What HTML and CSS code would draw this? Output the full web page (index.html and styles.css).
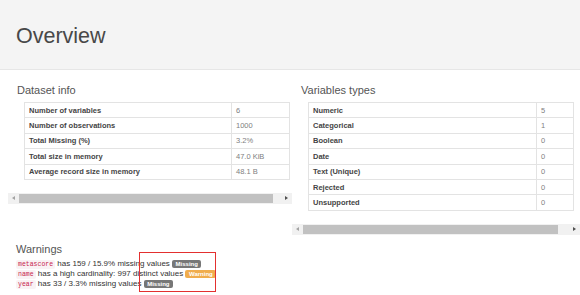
FILE: index.html
```html
<!DOCTYPE html>
<html lang="en">
<head>
  <meta charset="UTF-8">
  <title>Overview</title>
  <link rel="stylesheet" href="styles.css">
</head>
<body>
  <div class="page-header">
    <h1>Overview</h1>
  </div>

  <div class="row">
    <div class="col col-left">
      <h2>Dataset info</h2>
      <div class="table-wrap">
        <table class="stats stats-info">
          <tr><th>Number of variables</th><td>6</td></tr>
          <tr><th>Number of observations</th><td>1000</td></tr>
          <tr><th>Total Missing (%)</th><td>3.2%</td></tr>
          <tr><th>Total size in memory</th><td>47.0 KiB</td></tr>
          <tr><th>Average record size in memory</th><td>48.1 B</td></tr>
        </table>
      </div>
      <div class="scrollbar">
        <span class="arrow arrow-left off"></span>
        <span class="thumb thumb-left"></span>
        <span class="arrow arrow-right"></span>
      </div>
    </div>

    <div class="col col-right">
      <h2>Variables types</h2>
      <div class="table-wrap">
        <table class="stats stats-types">
          <tr><th>Numeric</th><td>5</td></tr>
          <tr><th>Categorical</th><td>1</td></tr>
          <tr><th>Boolean</th><td>0</td></tr>
          <tr><th>Date</th><td>0</td></tr>
          <tr><th>Text (Unique)</th><td>0</td></tr>
          <tr><th>Rejected</th><td>0</td></tr>
          <tr><th>Unsupported</th><td>0</td></tr>
        </table>
      </div>
      <div class="scrollbar">
        <span class="arrow arrow-left off"></span>
        <span class="thumb thumb-right"></span>
        <span class="arrow arrow-right"></span>
      </div>
    </div>
  </div>

  <div class="warnings">
    <h2>Warnings</h2>
    <ul>
      <li><code>metascore</code> has 159 / 15.9% missing values <span class="label label-default">Missing</span></li>
      <li><code>name</code> has a high cardinality: 997 distinct values <span class="label label-warning">Warning</span></li>
      <li><code>year</code> has 33 / 3.3% missing values <span class="label label-default">Missing</span></li>
    </ul>
    <div class="highlight"></div>
  </div>
</body>
</html>
```

FILE: styles.css
```css
body {
  margin: 0;
  font-family: 'Liberation Sans', Arial, sans-serif;
  color: #333;
  background: #fff;
}

.page-header {
  height: 69px;
  background-color: #f4f4f4;
  border-bottom: 1px solid #e6e6e6;
  padding-left: 16px;
}

.page-header h1 {
  margin: 0;
  padding-top: 24px;
  font-size: 21.5px;
  line-height: 24px;
  font-weight: normal;
  color: #484848;
}

.row {
  display: flex;
  padding-left: 8px;
}

.col-left {
  width: 284px;
}

.col-right {
  width: 288px;
}

h2 {
  margin: 14px 0 5px;
  padding-left: 9px;
  font-size: 11px;
  line-height: 13px;
  font-weight: normal;
  color: #555;
}

.table-wrap {
  padding-left: 16px;
  margin-bottom: 13px;
}

.stats {
  width: 266px;
  border-collapse: collapse;
  font-size: 7.5px;
}

.stats th,
.stats td {
  height: 15.4px;
  padding: 0 4px;
  border: 1px solid #e3e3e3;
  text-align: left;
  box-sizing: border-box;
}

.stats th {
  font-weight: bold;
  color: #444;
}

.stats td {
  color: #808080;
}

.stats-info td {
  width: 58px;
}

.stats-types td {
  width: 37px;
}

/* fake horizontal scrollbar under each table */
.scrollbar {
  display: flex;
  align-items: center;
  height: 11px;
  background-color: #f1f1f1;
}

.thumb {
  height: 9px;
  background-color: #c1c1c1;
}

.thumb-left {
  width: 254px;
}

.thumb-right {
  width: 255px;
}

.arrow {
  width: 11px;
  height: 11px;
  position: relative;
}

.arrow-right {
  margin-left: auto;
}

.arrow::after {
  content: "";
  position: absolute;
  top: 3px;
  left: 4px;
  border-top: 2.5px solid transparent;
  border-bottom: 2.5px solid transparent;
}

.arrow-left::after {
  border-right: 3px solid #a3a3a3;
}

.arrow-right::after {
  border-left: 3px solid #505050;
}

.warnings {
  position: relative;
  padding: 8px 16px 20px;
}

.warnings h2 {
  margin: 0 0 3px;
  padding-left: 0;
}

.warnings ul {
  list-style: none;
  margin: 0;
  padding: 0;
  font-size: 8px;
  line-height: 10px;
  color: #333;
}

.warnings li {
  height: 10px;
}

code {
  font-family: 'Liberation Mono', 'DejaVu Sans Mono', monospace;
  font-size: 6.5px;
  line-height: 1;
  padding: 1px 2px;
  color: #c7254e;
  background-color: #f9f2f4;
  border-radius: 2px;
}

.label {
  display: inline-block;
  font-size: 6px;
  line-height: 8px;
  font-weight: bold;
  color: #fff;
  padding: 0 3.5px;
  border-radius: 2px;
}

.label-default {
  background-color: #777;
}

.label-warning {
  background-color: #f0ad4e;
}

.highlight {
  position: absolute;
  left: 139px;
  top: 17px;
  width: 75px;
  height: 38px;
  border: 1.5px solid #e3302f;
}
```
